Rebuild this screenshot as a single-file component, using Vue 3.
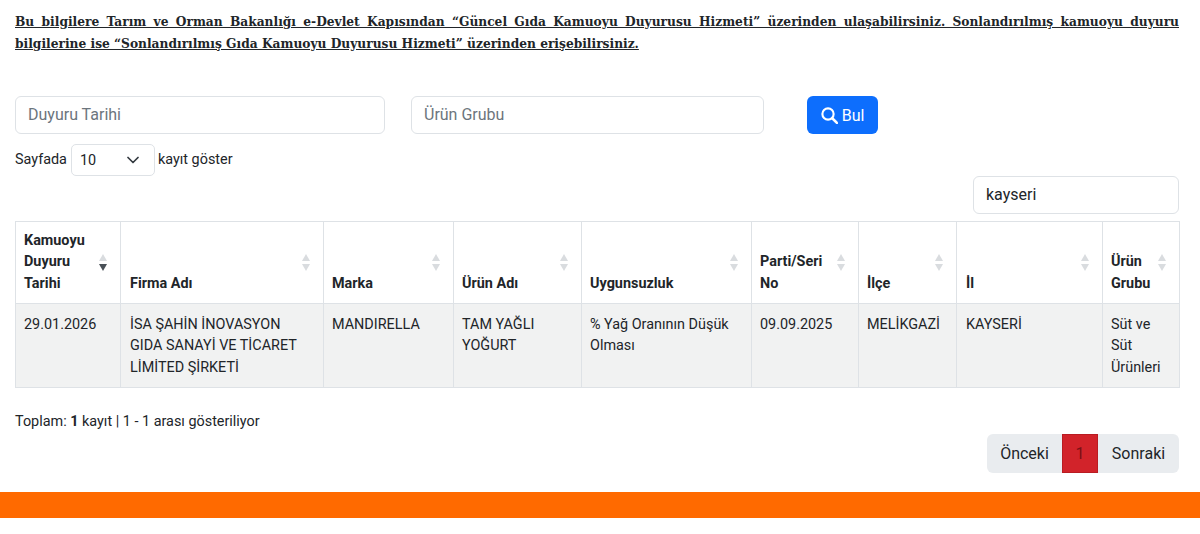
<template>
  <div class="page">
    <div class="notice">
      <p class="first">Bu bilgilere Tarım ve Orman Bakanlığı e-Devlet Kapısından “Güncel Gıda Kamuoyu Duyurusu Hizmeti” üzerinden ulaşabilirsiniz. Sonlandırılmış kamuoyu duyuru</p>
      <p>bilgilerine ise “Sonlandırılmış Gıda Kamuoyu Duyurusu Hizmeti” üzerinden erişebilirsiniz.</p>
    </div>

    <div class="filters">
      <input class="field date" type="text" placeholder="Duyuru Tarihi" />
      <input class="field group" type="text" placeholder="Ürün Grubu" />
      <button class="find">
        <svg width="17" height="17" viewBox="0 0 16 16" fill="none" stroke="currentColor">
          <circle cx="6.6" cy="6.6" r="5.3" stroke-width="2" />
          <path d="M10.6 10.6 L15 15" stroke-width="2.4" stroke-linecap="round" />
        </svg>
        Bul
      </button>
    </div>

    <div class="length">
      <span>Sayfada</span>
      <div class="select-wrap">
        <select>
          <option>10</option>
          <option>25</option>
          <option>50</option>
        </select>
        <svg class="chevron" width="12" height="8" viewBox="0 0 12 8" fill="none">
          <path d="M1 1.5 L6 6.5 L11 1.5" stroke="#343a40" stroke-width="1.7" stroke-linecap="round" stroke-linejoin="round" />
        </svg>
      </div>
      <span>kayıt göster</span>
    </div>

    <div class="search-row">
      <input class="field search" type="text" value="kayseri" />
    </div>

    <table>
      <colgroup>
        <col v-for="col in columns" :key="col.label" :style="{ width: col.width + 'px' }" />
      </colgroup>
      <thead>
        <tr>
          <th v-for="col in columns" :key="col.label">
            <span class="th-label" v-html="col.label"></span>
            <span class="sort">
              <i class="up"></i>
              <i class="down" :class="{ active: col.sorted }"></i>
            </span>
          </th>
        </tr>
      </thead>
      <tbody>
        <tr>
          <td v-for="(cell, i) in row" :key="i" v-html="cell"></td>
        </tr>
      </tbody>
    </table>

    <div class="summary">Toplam: <b>1</b> kayıt | 1 - 1 arası gösteriliyor</div>

    <div class="pager">
      <a class="prev">Önceki</a>
      <a class="current">1</a>
      <a class="next">Sonraki</a>
    </div>
  </div>
  <div class="footer-bar"></div>
</template>

<script setup>
const columns = [
  { label: 'Kamuoyu<br>Duyuru<br>Tarihi', width: 105, sorted: true },
  { label: 'Firma Adı', width: 203 },
  { label: 'Marka', width: 130 },
  { label: 'Ürün Adı', width: 128 },
  { label: 'Uygunsuzluk', width: 170 },
  { label: 'Parti/Seri<br>No', width: 107 },
  { label: 'İlçe', width: 98 },
  { label: 'İl', width: 146 },
  { label: 'Ürün<br>Grubu', width: 77 }
];

const row = [
  '29.01.2026',
  'İSA ŞAHİN İNOVASYON<br>GIDA SANAYİ VE TİCARET<br>LİMİTED ŞİRKETİ',
  'MANDIRELLA',
  'TAM YAĞLI<br>YOĞURT',
  '% Yağ Oranının Düşük<br>Olması',
  '09.09.2025',
  'MELİKGAZİ',
  'KAYSERİ',
  'Süt ve<br>Süt<br>Ürünleri'
];
</script>

<style>
html, body {
  margin: 0;
  background: #fff;
}
</style>

<style scoped>
.page {
  padding: 11px 21px 0 15px;
  font-family: Roboto, "Liberation Sans", sans-serif;
  font-size: 14.4px;
  line-height: 21.6px;
  color: #212529;
}

.notice {
  font-family: "DejaVu Serif Condensed", "DejaVu Serif", serif;
  font-size: 13.6px;
  font-weight: 700;
  line-height: 21.5px;
  text-decoration: underline;
}

.notice p {
  margin: 0;
}

.first {
  text-align: justify;
  text-align-last: justify;
}

.filters {
  display: flex;
  align-items: stretch;
  margin-top: 42px;
}

.field {
  box-sizing: border-box;
  height: 38px;
  padding: 0 12px 2px;
  border: 1px solid #dee2e6;
  border-radius: 6px;
  background: #fff;
  font-family: inherit;
  font-size: 16px;
  color: #212529;
  outline: none;
}

.field::placeholder {
  color: #6c757d;
  opacity: 1;
}

.date {
  width: 370px;
  margin-right: 26px;
}

.group {
  width: 353px;
  margin-right: 43px;
}

.find {
  display: flex;
  align-items: center;
  justify-content: center;
  gap: 4px;
  width: 71px;
  height: 38px;
  padding: 0;
  border: none;
  border-radius: 6px;
  background: #0d6efd;
  color: #fff;
  font-family: inherit;
  font-size: 16px;
}

.length {
  display: flex;
  align-items: center;
  gap: 4px;
  height: 32px;
  margin-top: 10px;
}

.select-wrap {
  position: relative;
  width: 84px;
  height: 32px;
  margin-right: -1px;
}

.select-wrap select {
  appearance: none;
  box-sizing: border-box;
  width: 100%;
  height: 100%;
  padding: 0 8px;
  border: 1px solid #dee2e6;
  border-radius: 5px;
  background: #fff;
  font-family: inherit;
  font-size: 14.4px;
  color: #212529;
}

.chevron {
  position: absolute;
  top: 12px;
  right: 16px;
  pointer-events: none;
}

.search-row {
  display: flex;
  justify-content: flex-end;
}

.search {
  width: 206px;
}

table {
  width: 1164px;
  margin-top: 7px;
  border-collapse: collapse;
  table-layout: fixed;
}

th, td {
  border: 1px solid #dee2e6;
  text-align: left;
}

th {
  position: relative;
  padding: 7.5px 8px 8.5px;
  vertical-align: bottom;
  font-weight: 700;
}

td {
  padding: 10px 8px 8px;
  vertical-align: top;
  background: #f1f2f2;
}

th:nth-child(2), td:nth-child(2), th:nth-child(8), td:nth-child(8) {
  padding-left: 9px;
}

.sort {
  position: absolute;
  top: 32px;
  right: 13px;
  display: flex;
  flex-direction: column;
  gap: 3px;
}

.sort i {
  display: block;
  width: 0;
  height: 0;
  border-left: 4px solid transparent;
  border-right: 4px solid transparent;
}

.sort .up {
  border-bottom: 7px solid #d9dcdf;
}

.sort .down {
  border-top: 7px solid #d9dcdf;
}

.sort .down.active {
  border-top-color: #495057;
}

.summary {
  margin-top: 23px;
}

.pager {
  display: flex;
  justify-content: flex-end;
  height: 39px;
  margin-top: 2px;
  font-size: 16px;
}

.pager a {
  display: flex;
  align-items: center;
  justify-content: center;
  box-sizing: border-box;
  background: #e9ecef;
}

.prev {
  width: 75px;
  border-radius: 6px 0 0 6px;
}

.pager .current {
  width: 36px;
  background: #d2232a;
  border: 1px solid #b91c22;
  color: #7a1014;
}

.next {
  width: 81px;
  border-radius: 0 6px 6px 0;
}

.footer-bar {
  height: 26px;
  margin-top: 19px;
  background: #ff6a00;
}
</style>
